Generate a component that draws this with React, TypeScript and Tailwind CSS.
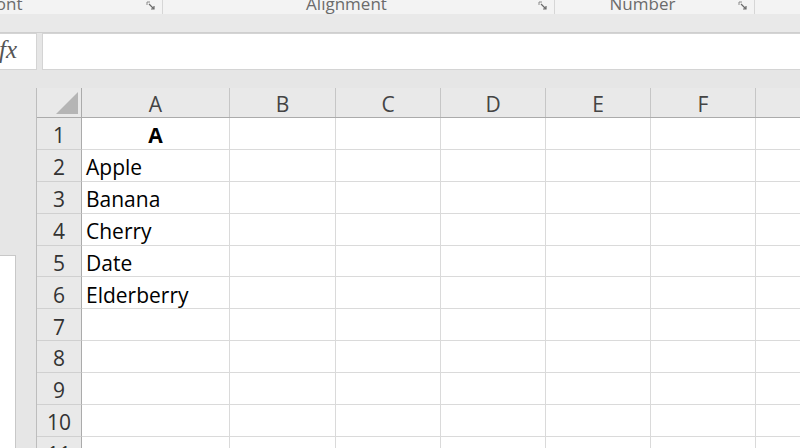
import React from "react";

const cols = [
  { label: "A", w: "w-[148px]" },
  { label: "B", w: "w-[106px]" },
  { label: "C", w: "w-[105px]" },
  { label: "D", w: "w-[105px]" },
  { label: "E", w: "w-[105px]" },
  { label: "F", w: "w-[105px]" },
  { label: "", w: "w-[60px]" },
];

const data: Record<number, { text: string; bold?: boolean }> = {
  1: { text: "A", bold: true },
  2: { text: "Apple" },
  3: { text: "Banana" },
  4: { text: "Cherry" },
  5: { text: "Date" },
  6: { text: "Elderberry" },
};

const rows = [1, 2, 3, 4, 5, 6, 7, 8, 9, 10, 11];

function Launcher() {
  return (
    <svg width="10" height="10" viewBox="0 0 10 10" className="shrink-0">
      <path d="M1 1 H4 M1 1 V4" stroke="#8a8a8a" strokeWidth="1" fill="none" />
      <path d="M3 3 L8 8 M8 5 V8 H5" stroke="#6a6a6a" strokeWidth="1.2" fill="none" />
    </svg>
  );
}

function RibbonGroup({ label, width, pos }: { label: string; width: string; pos: string }) {
  return (
    <div className={`${width} h-full flex items-start border-r border-[#d6d6d6] relative shrink-0`}>
      <span className={`${pos} text-[17px] leading-[17px] mt-[-5px] text-[#6b6b6b] whitespace-nowrap`}>
        {label}
      </span>
      <div className="absolute right-[6px] top-[1px]">
        <Launcher />
      </div>
    </div>
  );
}

export default function App() {
  return (
    <div
      className="w-[800px] h-[448px] overflow-hidden bg-[#e6e6e6] flex flex-col"
      style={{ fontFamily: '"Open Sans", "Noto Sans", sans-serif' }}
    >
      {/* ribbon group labels */}
      <div className="h-[14px] bg-[#f3f3f3] flex shrink-0 overflow-hidden">
        <RibbonGroup label="Font" width="w-[163px]" pos="ml-[-13px]" />
        <RibbonGroup label="Alignment" width="w-[392px]" pos="flex-1 text-center pr-[24px]" />
        <RibbonGroup label="Number" width="w-[200px]" pos="flex-1 text-center pr-[24px]" />
        <div className="flex-1" />
      </div>
      <div className="h-[19px] bg-[#e9e9e9] border-b border-[#cfcfcf] shrink-0" />

      {/* formula bar */}
      <div className="h-[37px] flex shrink-0 bg-[#e6e6e6]">
        <div className="w-[37px] h-full bg-white border border-l-0 border-[#d4d4d4] flex items-center">
          <span
            className="italic text-[25px] text-[#555] ml-[-1px] mt-[-3px]"
            style={{ fontFamily: '"Liberation Serif", serif' }}
          >
            fx
          </span>
        </div>
        <div className="ml-[5px] flex-1 h-full bg-white border border-r-0 border-[#d4d4d4]" />
      </div>

      <div className="h-[18px] shrink-0" />

      {/* sheet */}
      <div className="flex flex-1 min-h-0">
        <div className="w-[36px] shrink-0 flex flex-col">
          <div className="h-[167px]" />
          <div className="flex-1 w-[16px] bg-white border-t border-r border-[#c8c8c8]" />
        </div>

        <div className="flex-1 flex flex-col border-l border-[#bdbdbd] bg-white">
          {/* column headers */}
          <div className="h-[30px] flex shrink-0 bg-[#e9e9e9] border-b border-[#ababab]">
            <div className="w-[45px] shrink-0 border-r border-[#ababab] flex items-end justify-end pr-[3px] pb-[3px]">
              <svg width="22" height="22" viewBox="0 0 22 22">
                <polygon points="22,0 22,22 0,22" fill="#b5b5b5" />
              </svg>
            </div>
            {cols.map((c, i) => (
              <div
                key={i}
                className={`${c.w} shrink-0 border-r border-[#c6c6c6] flex items-center justify-center text-[21px] text-[#444] pt-[5px]`}
              >
                {c.label}
              </div>
            ))}
          </div>

          {/* rows */}
          {rows.map((r) => (
            <div key={r} className="h-[31.9px] flex shrink-0">
              <div className="w-[45px] shrink-0 bg-[#e9e9e9] border-r border-b border-r-[#ababab] border-b-[#d0d0d0] flex items-center justify-center text-[21px] text-[#333] pt-[5px]">
                {r}
              </div>
              {cols.map((c, i) => {
                const cell = i === 0 ? data[r] : undefined;
                return (
                  <div
                    key={i}
                    className={`${c.w} shrink-0 border-r border-b border-[#dadada] flex items-center text-[21px] text-black pt-[5px] whitespace-nowrap ${
                      cell?.bold ? "justify-center font-bold" : "pl-[4px]"
                    }`}
                  >
                    {cell?.text}
                  </div>
                );
              })}
            </div>
          ))}
        </div>
      </div>
    </div>
  );
}
